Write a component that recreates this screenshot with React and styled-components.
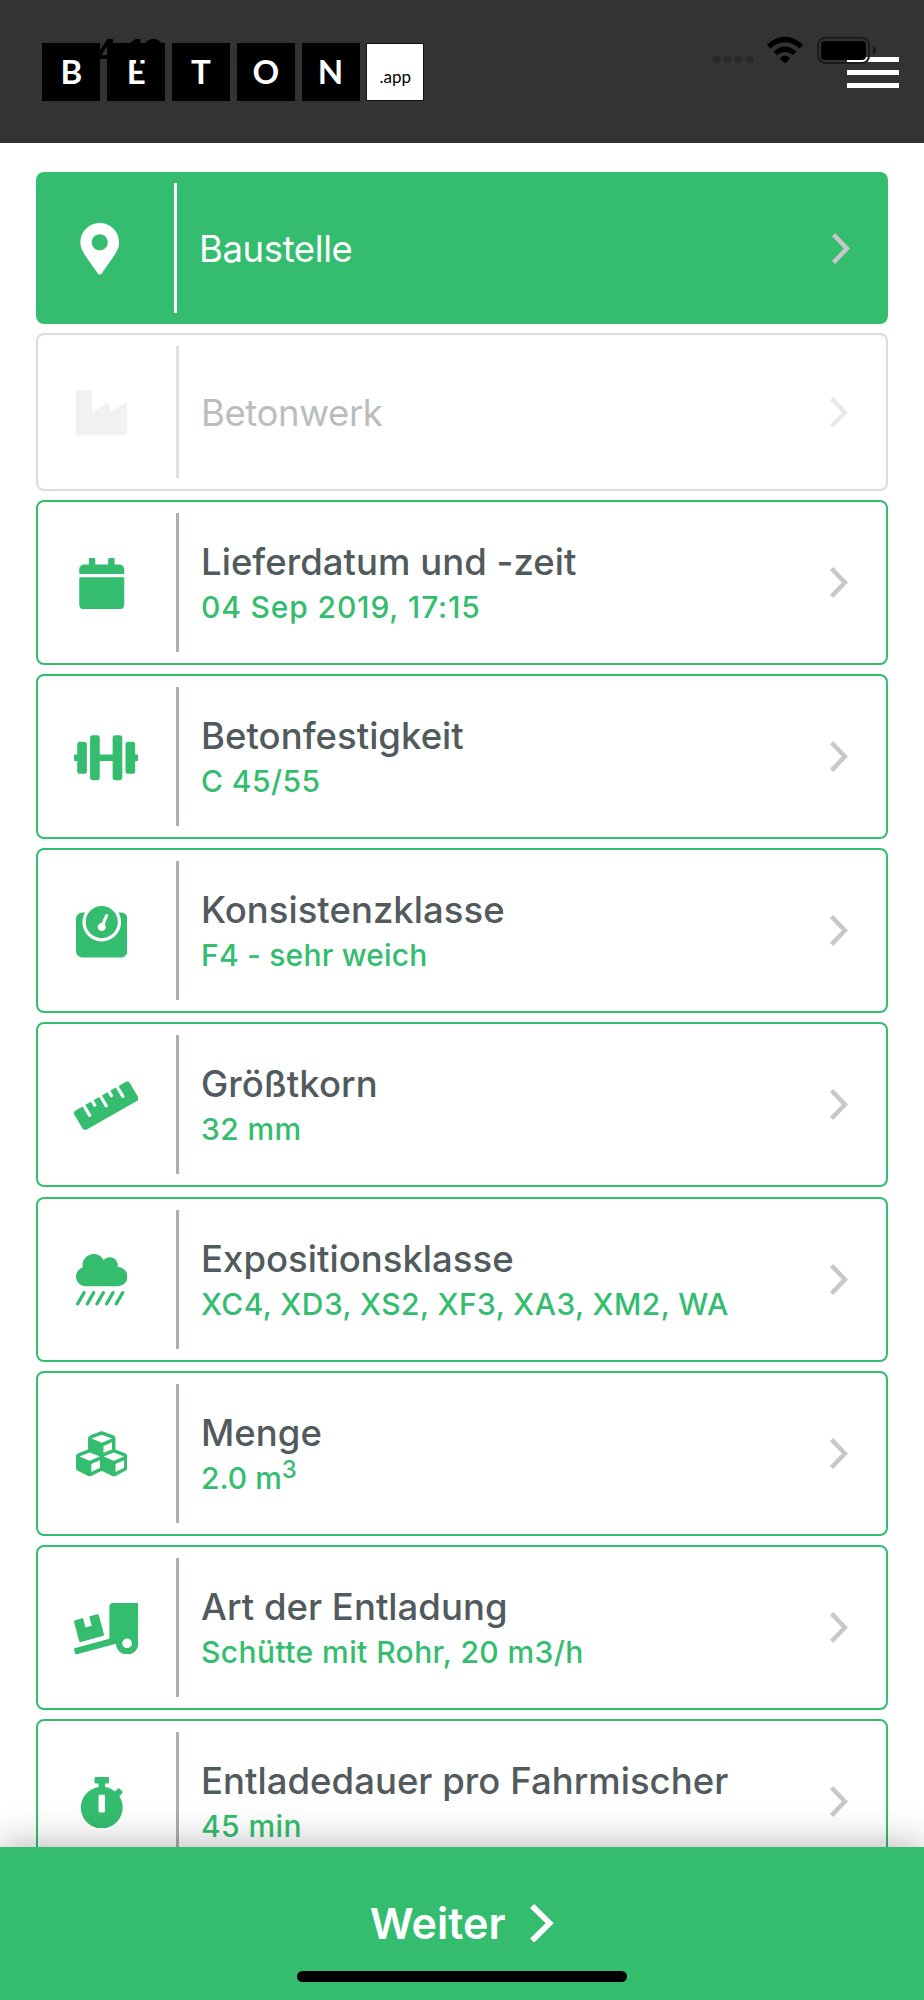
import React from 'react'
import styled, { createGlobalStyle } from 'styled-components'
import {
  FaMapMarkerAlt,
  FaIndustry,
  FaCalendar,
  FaDumbbell,
  FaWeight,
  FaRuler,
  FaCloudShowersHeavy,
  FaCubes,
  FaTruckLoading,
  FaStopwatch,
} from 'react-icons/fa'

const GREEN = '#34bd6f'

const GlobalStyle = createGlobalStyle`
    * {
        box-sizing: border-box;
    }
    body {
        margin: 0;
        background: #fff;
        font-family: Inter, "Liberation Sans", sans-serif;
    }
`

const Screen = styled.div`
    position: relative;
    display: flex;
    flex-direction: column;
    height: 2000px;
    overflow: hidden;
`

const Header = styled.header`
    position: relative;
    display: flex;
    flex: none;
    align-items: center;
    justify-content: space-between;
    height: 143px;
    padding: 0 25px 0 42.4px;
    background: #333;
`

const Logo = styled.div`
    display: flex;
    gap: 6.8px;
`

const Tile = styled.span`
    display: flex;
    align-items: center;
    justify-content: center;
    width: 58px;
    height: 58px;
    padding-bottom: 1px;
    background: #000;
    color: #fff;
    font-family: Lato, sans-serif;
    font-size: 33px;
    font-weight: 700;
    line-height: 1;
`

const AppTile = styled(Tile)`
    padding: 10px 0 0;
    border: 1px solid #111;
    background: #fff;
    color: #000;
    font-size: 17px;
    font-weight: 400;
`

const MenuButton = styled.div`
    display: flex;
    flex-direction: column;
    gap: 8px;
    width: 52px;
    margin-top: 2px;
`

const MenuLine = styled.span`
    height: 5px;
    background: #fff;
`

/* system status bar, drawn over the header */
const StatusBar = styled.div`
    position: absolute;
    top: 0;
    left: 0;
    display: flex;
    align-items: flex-start;
    justify-content: space-between;
    width: 100%;
    padding: 36px 47px 0 95px;
`

const Time = styled.span`
    margin-top: -6px;
    padding-top: 1px;
    color: #000;
    font-size: 34px;
    font-weight: 600;
    line-height: 41px;
`

const List = styled.main`
    display: flex;
    flex-direction: column;
    gap: 9.1px;
    padding: 29px 36px 0;
`

const variants = {
  active: { bg: GREEN, border: 'none', line: '#fff', icon: '#fff', title: '#fff', height: 152, weight: 400 },
  disabled: { bg: '#fff', border: '2px solid #d8dddc', line: '#dde1e0', icon: '#f1f1f1', title: '#babdbd', height: 158, weight: 400 },
  filled: { bg: '#fff', border: `2px solid ${GREEN}`, line: '#a9b0b0', icon: GREEN, title: '#515a5c', height: 165, weight: 500 },
}

const Row = styled.div`
    display: flex;
    flex: none;
    align-items: center;
    height: ${({ $v }) => $v.height}px;
    padding: 11px 38px 11px 36px;
    border: ${({ $v }) => $v.border};
    border-radius: 8px;
    background: ${({ $v }) => $v.bg};
`

/* the wide icons are wider than the box and run over its right edge */
const IconBox = styled.div`
    width: 55px;
    margin-right: 47px;
    padding-top: 2px;
    color: ${({ $v }) => $v.icon};
    font-size: 51.5px;

    svg {
        display: block;
        width: ${({ $wide }) => ($wide ? '1.25em' : '1em')};
        height: 1em;
        margin: 0 auto;
    }
`

const Divider = styled.span`
    align-self: stretch;
    width: 3px;
    margin-right: 22px;
    background: ${({ $v }) => $v.line};
`

const Texts = styled.div`
    flex: 1;
    padding-top: ${({ $double }) => ($double ? 5 : 2)}px;
    white-space: nowrap;
`

const Title = styled.div`
    color: ${({ $v }) => $v.title};
    font-size: 36.5px;
    font-weight: ${({ $v }) => $v.weight};
    letter-spacing: ${({ $v }) => ($v.weight === 400 ? '-0.4px' : '0.03px')};
    line-height: 45px;
`

const Value = styled.div`
    color: ${GREEN};
    font-size: 30px;
    font-weight: 500;
    letter-spacing: ${({ $tracking }) => $tracking}px;
    line-height: 45px;

    sup {
        font-size: 24px;
        line-height: 0;
    }
`

const ChevronSvg = styled.svg`
    flex: none;
    width: ${({ $width }) => $width}px;
    height: ${({ $height }) => $height}px;
    fill: ${({ $color }) => $color};
`

const Footer = styled.footer`
    position: absolute;
    bottom: 0;
    left: 0;
    display: flex;
    flex-direction: column;
    align-items: center;
    width: 100%;
    height: 153px;
    padding-top: 50px;
    background: ${GREEN};
    box-shadow: 0 0 38px rgba(0, 0, 0, 0.32);
`

const NextButton = styled.div`
    display: flex;
    align-items: center;
    gap: 25px;
    color: #fff;
    font-size: 43px;
    font-weight: 600;
    line-height: 52px;
`

const HomeIndicator = styled.span`
    width: 330px;
    height: 11px;
    margin-top: 22px;
    border-radius: 6px;
    background: #000;
`

function Chevron({ width = 18, height = 31, color = '#c7c7cc' }) {
  return (
    <ChevronSvg $width={width} $height={height} $color={color} viewBox="0 0 18 31" preserveAspectRatio="none">
      <path d="M3.2 0 18 15.5 3.2 31 0 27.8 11.9 15.5 0 3.2Z" />
    </ChevronSvg>
  )
}

function StatusIcons() {
  return (
    <svg width="165" height="30" viewBox="712 36 165 30">
      <g fill="#292929">
        <rect x="712.7" y="56" width="7.4" height="7" rx="2.5" />
        <rect x="723.7" y="56" width="7.4" height="7" rx="2.5" />
        <rect x="735" y="56" width="7.4" height="7" rx="2.5" />
        <rect x="746.2" y="56" width="7.4" height="7" rx="2.5" />
      </g>
      <g fill="none" stroke="#000" strokeWidth="5.2">
        <path d="M768.6 46.6Q785 32.4 801.4 46.6" />
        <path d="M775.3 53.4Q785 45 794.7 53.4" />
      </g>
      <path d="M779.8 58.2Q785 53 790.2 58.2L785 63.4Z" />
      <rect x="818.2" y="37.8" width="50.8" height="25.2" rx="7" fill="none" stroke="#1c1c1c" strokeWidth="2" />
      <rect x="821" y="41" width="45" height="19" rx="4" />
      <path d="M872.7 45.5Q876 47 876 50.3T872.7 55Z" fill="#1c1c1c" />
    </svg>
  )
}

const rows = [
  { icon: FaMapMarkerAlt, title: 'Baustelle', variant: 'active' },
  { icon: FaIndustry, title: 'Betonwerk', variant: 'disabled' },
  { icon: FaCalendar, title: 'Lieferdatum und -zeit', value: '04 Sep 2019, 17:15', tracking: 0.85 },
  { icon: FaDumbbell, wide: true, title: 'Betonfestigkeit', value: 'C 45/55' },
  { icon: FaWeight, title: 'Konsistenzklasse', value: 'F4 - sehr weich', tracking: 0.2 },
  { icon: FaRuler, wide: true, title: 'Größtkorn', value: '32 mm' },
  { icon: FaCloudShowersHeavy, title: 'Expositionsklasse', value: 'XC4, XD3, XS2, XF3, XA3, XM2, WA' },
  { icon: FaCubes, title: 'Menge', value: <>2.0 m<sup>3</sup></>, tracking: 0 },
  { icon: FaTruckLoading, wide: true, title: 'Art der Entladung', value: 'Schütte mit Rohr, 20 m3/h' },
  { icon: FaStopwatch, title: 'Entladedauer pro Fahrmischer', value: '45 min' },
]

function OrderRow({ icon: Icon, wide, title, value, tracking = 0.42, variant = 'filled' }) {
  const v = variants[variant]
  return (
    <Row $v={v}>
      <IconBox $v={v} $wide={wide}><Icon /></IconBox>
      <Divider $v={v} />
      <Texts $double={Boolean(value)}>
        <Title $v={v}>{title}</Title>
        {value && <Value $tracking={tracking}>{value}</Value>}
      </Texts>
      <Chevron color={variant === 'disabled' ? '#e9e9eb' : '#c7c7cc'} />
    </Row>
  )
}

function App() {
  return (
    <Screen>
      <GlobalStyle />
      <Header>
        <Logo>
          {['B', 'E', 'T', 'O', 'N'].map((letter) => (
            <Tile key={letter}>{letter}</Tile>
          ))}
          <AppTile>.app</AppTile>
        </Logo>
        <MenuButton>
          <MenuLine />
          <MenuLine />
          <MenuLine />
        </MenuButton>
        <StatusBar>
          <Time>4:19</Time>
          <StatusIcons />
        </StatusBar>
      </Header>
      <List>
        {rows.map((row) => (
          <OrderRow key={row.title} {...row} />
        ))}
      </List>
      <Footer>
        <NextButton>
          Weiter
          <Chevron width={23.7} height={38.6} color="#fff" />
        </NextButton>
        <HomeIndicator />
      </Footer>
    </Screen>
  )
}

export default App
